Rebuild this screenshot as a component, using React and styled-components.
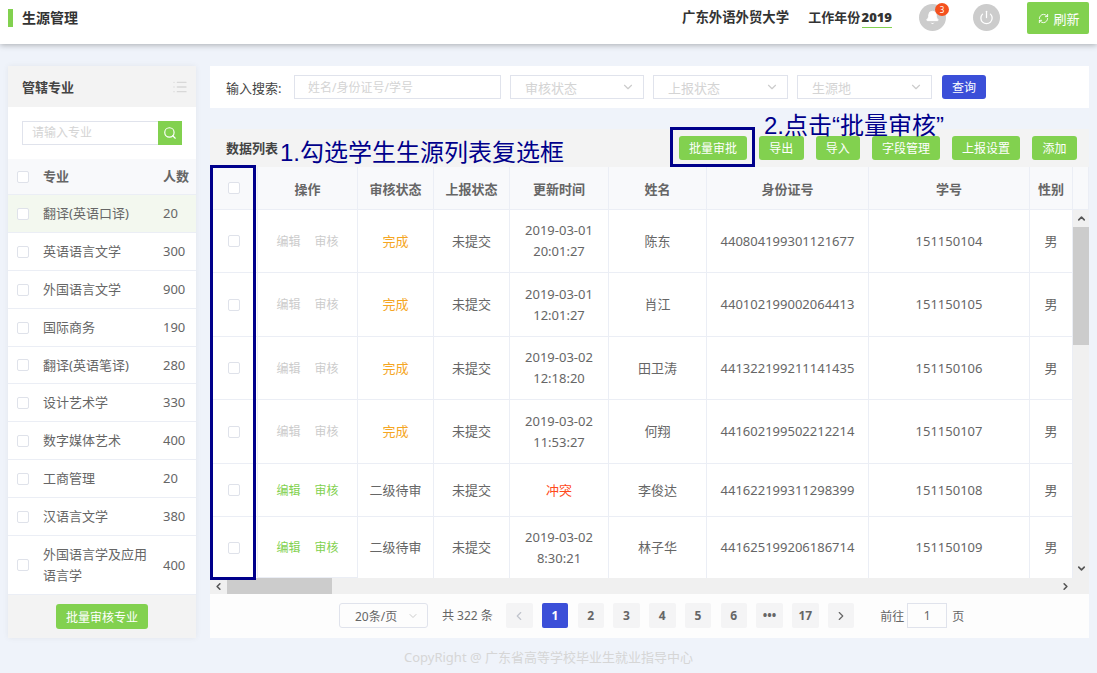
import styled, { createGlobalStyle } from "styled-components";
import { Search, ChevronDown, ChevronLeft, ChevronRight, Bell, Power, RefreshCw, List } from "lucide-react";

const GlobalStyle = createGlobalStyle`
  html, body {
    margin: 0;
    padding: 0;
    background: #eff3fa;
  }
  * {
    box-sizing: border-box;
  }
  body {
    font-family: "Noto Sans", "Noto Sans CJK SC", sans-serif;
    font-size: 13px;
    color: #666;
  }
`;

const Page = styled.div`
  width: 1097px;
  height: 673px;
  overflow: hidden;
  display: flex;
  flex-direction: column;
`;

const Header = styled.header`
  height: 44px;
  flex: none;
  background: #fff;
  box-shadow: 0 1px 6px rgba(0, 0, 0, 0.3);
  display: flex;
  align-items: flex-start;
  padding: 2px 8px 0;
  position: relative;
`;

const PageTitle = styled.h1`
  margin: 7px 0 0;
  height: 18px;
  border-left: 5px solid #82d14f;
  padding-left: 9px;
  font-size: 14px;
  line-height: 18px;
  font-weight: 700;
  color: #333;
`;

const HeaderRight = styled.div`
  margin-left: auto;
  display: flex;
  align-items: flex-start;
`;

const School = styled.span`
  font-size: 13.4px;
  font-weight: 700;
  color: #333;
  line-height: 18px;
  margin-top: 6px;
  margin-right: 19px;
`;

const Year = styled.span`
  font-size: 13px;
  font-weight: 700;
  color: #333;
  line-height: 18px;
  margin-top: 6px;
  margin-right: 27px;
  word-spacing: -2px;

  b {
    border-bottom: 1px solid #82d14f;
    padding-bottom: 1px;
  }
`;

const RoundIcon = styled.div`
  width: 27px;
  height: 27px;
  margin-top: 2px;
  margin-right: ${(p) => p.$gap}px;
  border-radius: 50%;
  background: #ccc;
  color: #fff;
  display: flex;
  align-items: center;
  justify-content: center;
  position: relative;
`;

const Badge = styled.span`
  position: absolute;
  top: -1px;
  right: -3px;
  width: 14px;
  height: 13px;
  border-radius: 50%;
  background: #f4511e;
  color: #fff;
  font-size: 8px;
  line-height: 13px;
  text-align: center;
`;

const RefreshButton = styled.button`
  width: 62px;
  height: 32px;
  border: 0;
  border-radius: 2px;
  background: #82d14f;
  color: #fff;
  font: inherit;
  display: flex;
  align-items: center;
  justify-content: center;
  gap: 4px;
  padding: 0 0 0 2px;
`;

const Content = styled.div`
  flex: none;
  height: 572px;
  margin-top: 22px;
  padding: 0 8px;
  display: flex;
  gap: 14px;
`;

const Sidebar = styled.aside`
  width: 188px;
  flex: none;
  background: #fff;
  box-shadow: 0 0 6px rgba(0, 0, 0, 0.06);
  display: flex;
  flex-direction: column;
`;

const SideTitle = styled.div`
  height: 41px;
  flex: none;
  background: #f3f3f3;
  display: flex;
  align-items: center;
  justify-content: space-between;
  padding: 0 8px 0 14px;
  font-weight: 700;
  color: #444;
`;

const SideSearch = styled.div`
  height: 52px;
  flex: none;
  padding: 14px 14px 0;
  display: flex;
  align-items: flex-start;
`;

const SideInput = styled.div`
  flex: 1;
  height: 24px;
  border: 1px solid #e0e3ec;
  border-right: 0;
  padding-left: 9px;
  font-size: 12px;
  line-height: 22px;
  color: #d4d4d4;
`;

const SideSearchButton = styled.div`
  width: 24px;
  height: 24px;
  background: #82d14f;
  color: #fff;
  display: flex;
  align-items: center;
  justify-content: center;
`;

const MajorRow = styled.div`
  height: ${(p) => p.$h}px;
  flex: none;
  display: grid;
  grid-template-columns: 26px 120px 1fr;
  align-items: center;
  padding-left: 9px;
  border-bottom: 1px solid #ebeef5;
  background: ${(p) => (p.$head ? "#f8f9fb" : p.$active ? "#f3f8ef" : "#fff")};
  color: #666;
  font-weight: ${(p) => (p.$head ? 700 : 400)};
  line-height: 21px;
`;

const MajorName = styled.span`
  padding-right: 8px;
`;

const Check = styled.span`
  display: block;
  width: 12px;
  height: 12px;
  background: #fff;
  border: 1px solid #dfe2ea;
  border-radius: 2px;
`;

const SideFoot = styled.div`
  flex: 1;
  background: #f3f3f3;
  display: flex;
  align-items: center;
  justify-content: center;
`;

const GreenButton = styled.button`
  height: ${(p) => p.$h || 24}px;
  width: ${(p) => p.$w}px;
  border: 0;
  border-radius: 3px;
  background: #82d14f;
  color: #fff;
  font: inherit;
  font-size: 12px;
  padding: 0;
`;

const Main = styled.main`
  flex: 1;
  min-width: 0;
  display: flex;
  flex-direction: column;
  gap: 21px;
`;

const SearchCard = styled.section`
  height: 42px;
  flex: none;
  background: #fff;
  display: flex;
  align-items: center;
  padding-left: 16px;
  gap: 9px;
`;

const SearchLabel = styled.span`
  font-size: 13px;
  color: #444;
  width: 59px;
  flex: none;
  white-space: nowrap;
`;

const Field = styled.div`
  width: ${(p) => p.$w}px;
  height: 24px;
  border: 1px solid #e0e3ec;
  padding: 0 ${(p) => (p.$select ? "8px 0 14px" : "13px")};
  font-size: ${(p) => (p.$select ? 13 : 12)}px;
  color: #d4d4d4;
  display: flex;
  align-items: center;
  justify-content: space-between;
`;

const QueryButton = styled.button`
  width: 44px;
  height: 24px;
  margin-left: 1px;
  border: 0;
  border-radius: 3px;
  background: #3b4fd8;
  color: #fff;
  font: inherit;
  font-size: 12px;
  padding: 0;
`;

const TableCard = styled.section`
  flex: 1;
  min-height: 0;
  background: #fff;
  display: flex;
  flex-direction: column;
  position: relative;
`;

const TableBar = styled.div`
  height: 38px;
  flex: none;
  background: #f3f3f3;
  display: flex;
  align-items: center;
  padding: 0 12px 0 16px;
  gap: 12px;
`;

const BarTitle = styled.span`
  margin-right: auto;
  font-size: 13px;
  font-weight: 700;
  color: #444;
  margin-top: -2px;
`;

const COLUMNS = "48px 100px 76px 76px 99px 98px 162px 161px 43px";

const HeadRow = styled.div`
  height: 43px;
  flex: none;
  display: grid;
  grid-template-columns: ${COLUMNS} 16px;
  background: #f8f9fb;
  border-bottom: 1px solid #ebeef5;
`;

const HeadCell = styled.div`
  display: flex;
  align-items: center;
  justify-content: center;
  border-right: 1px solid #ebeef5;
  font-size: 13px;
  font-weight: 700;
  color: #666;
`;

const TableBody = styled.div`
  height: 384px;
  flex: none;
  display: grid;
  grid-template-columns: 863px 16px;
`;

const RowsWrap = styled.div`
  display: flex;
  flex-direction: column;
  min-width: 0;
`;

const DataRow = styled.div`
  height: ${(p) => p.$h}px;
  flex: none;
  display: grid;
  grid-template-columns: ${COLUMNS};
  border-bottom: ${(p) => (p.$last ? 0 : "1px solid #ebeef5")};
`;

const Cell = styled.div`
  display: flex;
  align-items: center;
  justify-content: center;
  text-align: center;
  border-right: 1px solid #ebeef5;
  border-bottom: ${(p) => (p.$under ? "1px solid #ebeef5" : 0)};
  line-height: 21px;
  color: ${(p) => p.$color || "#666"};
`;

const OpLink = styled.span`
  font-size: 12px;
  color: ${(p) => (p.$on ? "#82d14f" : "#ccc")};
  margin: 0 7px;
`;

const HScroll = styled.div`
  height: 16px;
  flex: none;
  margin-top: auto;
  background: #f0f0f0;
  display: flex;
  align-items: center;
  justify-content: space-between;
  color: #555;
  padding-right: 2px;
`;

const HLeft = styled.div`
  display: flex;
  align-items: center;
  height: 100%;
`;

const ScrollEnd = styled.span`
  width: 17px;
  display: flex;
  justify-content: center;
`;

const HThumb = styled.div`
  width: 105px;
  height: 100%;
  background: #ccc;
`;

const VScroll = styled.div`
  background: #f0f0f0;
  color: #555;
  display: flex;
  flex-direction: column;
  align-items: center;
`;

const VThumb = styled.div`
  width: 100%;
  height: 118px;
  background: #ccc;
`;

const VEnd = styled.span`
  height: 17px;
  display: flex;
  align-items: center;
  margin-top: ${(p) => (p.$bottom ? "auto" : 0)};
  margin-bottom: ${(p) => (p.$bottom ? "17px" : 0)};
`;

const Pager = styled.div`
  flex: 1;
  background: #fdfdfd;
  display: flex;
  align-items: flex-start;
  padding: 9px 0 0 129px;
`;

const PageSize = styled.div`
  width: 89px;
  height: 25px;
  border: 1px solid #e0e3ec;
  border-radius: 3px;
  padding: 0 8px 0 15px;
  font-size: 12px;
  display: flex;
  align-items: center;
  justify-content: space-between;
  color: #666;
  margin-right: 14px;
`;

const Total = styled.span`
  font-size: 12px;
  line-height: 25px;
  width: 64px;
  flex: none;
`;

const PageList = styled.div`
  display: flex;
  gap: 9.25px;
`;

const PageButton = styled.div`
  width: 26.5px;
  height: 25px;
  border-radius: 2px;
  background: ${(p) => (p.$active ? "#3b4fd8" : "#f4f4f5")};
  color: ${(p) => (p.$active ? "#fff" : p.$muted ? "#c0c4cc" : "#666")};
  font-size: 12px;
  font-weight: 700;
  display: flex;
  align-items: center;
  justify-content: center;
`;

const Jump = styled.div`
  margin-left: 26px;
  display: flex;
  align-items: center;
  height: 25px;
  font-size: 12px;
  gap: 3px;
`;

const JumpInput = styled.div`
  width: 40px;
  height: 25px;
  border: 1px solid #e0e3ec;
  display: flex;
  align-items: center;
  justify-content: center;
  margin-right: 2px;
`;

const Footer = styled.footer`
  flex: 1;
  text-align: center;
  color: #d6d6d6;
  font-size: 13px;
  line-height: 38px;
`;

const BlueBox = styled.div`
  position: absolute;
  left: ${(p) => p.$x}px;
  top: ${(p) => p.$y}px;
  width: ${(p) => p.$w}px;
  height: ${(p) => p.$h}px;
  border: 3px solid #00008b;
`;

const Note = styled.div`
  position: absolute;
  left: ${(p) => p.$x}px;
  top: ${(p) => p.$y}px;
  font-family: "Liberation Sans", "Noto Sans CJK SC", sans-serif;
  font-size: 24px;
  line-height: 28px;
  color: #00008b;
  white-space: nowrap;
`;

const majors = [
  { name: "翻译(英语口译)", count: 20, h: 38, active: true },
  { name: "英语语言文学", count: 300, h: 38 },
  { name: "外国语言文学", count: 900, h: 38 },
  { name: "国际商务", count: 190, h: 38 },
  { name: "翻译(英语笔译)", count: 280, h: 37 },
  { name: "设计艺术学", count: 330, h: 38 },
  { name: "数字媒体艺术", count: 400, h: 38 },
  { name: "工商管理", count: 20, h: 38 },
  { name: "汉语言文学", count: 380, h: 38 },
  { name: "外国语言学及应用语言学", count: 400, h: 59 },
];

const students = [
  { h: 63, done: true, review: "完成", date: "2019-03-01", time: "20:01:27", name: "陈东", id: "440804199301121677", no: "151150104" },
  { h: 64, done: true, review: "完成", date: "2019-03-01", time: "12:01:27", name: "肖江", id: "440102199002064413", no: "151150105" },
  { h: 63, done: true, review: "完成", date: "2019-03-02", time: "12:18:20", name: "田卫涛", id: "441322199211141435", no: "151150106" },
  { h: 64, done: true, review: "完成", date: "2019-03-02", time: "11:53:27", name: "何翔", id: "441602199502212214", no: "151150107" },
  { h: 53, review: "二级待审", conflict: true, name: "李俊达", id: "441622199311298399", no: "151150108" },
  { h: 61, review: "二级待审", date: "2019-03-02", time: "8:30:21", name: "林子华", id: "441625199206186714", no: "151150109" },
];

const columns = ["操作", "审核状态", "上报状态", "更新时间", "姓名", "身份证号", "学号", "性别"];
const pages = ["2", "3", "4", "5", "6", "•••", "17"];

export default function App() {
  return (
    <Page>
      <GlobalStyle />
      <Header>
        <PageTitle>生源管理</PageTitle>
        <HeaderRight>
          <School>广东外语外贸大学</School>
          <Year>
            工作年份 <b>2019</b>
          </Year>
          <RoundIcon $gap={27}>
            <Bell size={15} fill="#fff" strokeWidth={1.5} />
            <Badge>3</Badge>
          </RoundIcon>
          <RoundIcon $gap={27}>
            <Power size={15} strokeWidth={2} />
          </RoundIcon>
          <RefreshButton>
            <RefreshCw size={11} />
            刷新
          </RefreshButton>
        </HeaderRight>
      </Header>

      <Content>
        <Sidebar>
          <SideTitle>
            管辖专业
            <List size={16} color="#d8d8d8" />
          </SideTitle>
          <SideSearch>
            <SideInput>请输入专业</SideInput>
            <SideSearchButton>
              <Search size={14} />
            </SideSearchButton>
          </SideSearch>
          <MajorRow $head $h={36}>
            <Check />
            <MajorName>专业</MajorName>
            <span>人数</span>
          </MajorRow>
          {majors.map((m) => (
            <MajorRow key={m.name} $h={m.h} $active={m.active}>
              <Check />
              <MajorName>{m.name}</MajorName>
              <span>{m.count}</span>
            </MajorRow>
          ))}
          <SideFoot>
            <GreenButton $w={92} $h={25}>批量审核专业</GreenButton>
          </SideFoot>
        </Sidebar>

        <Main>
          <SearchCard>
            <SearchLabel>输入搜索:</SearchLabel>
            <Field $w={207}>姓名/身份证号/学号</Field>
            <Field $w={134} $select>
              <span>审核状态</span>
              <ChevronDown size={14} color="#ccc" />
            </Field>
            <Field $w={135} $select>
              <span>上报状态</span>
              <ChevronDown size={14} color="#ccc" />
            </Field>
            <Field $w={135} $select>
              <span>生源地</span>
              <ChevronDown size={14} color="#ccc" />
            </Field>
            <QueryButton>查询</QueryButton>
          </SearchCard>

          <TableCard>
            <TableBar>
              <BarTitle>数据列表</BarTitle>
              <GreenButton $w={68}>批量审批</GreenButton>
              <GreenButton $w={44.5}>导出</GreenButton>
              <GreenButton $w={44.5}>导入</GreenButton>
              <GreenButton $w={68}>字段管理</GreenButton>
              <GreenButton $w={68}>上报设置</GreenButton>
              <GreenButton $w={45}>添加</GreenButton>
            </TableBar>
            <HeadRow>
              <HeadCell>
                <Check />
              </HeadCell>
              {columns.map((c) => (
                <HeadCell key={c}>{c}</HeadCell>
              ))}
              <HeadCell />
            </HeadRow>
            <TableBody>
              <RowsWrap>
                {students.map((s, i) => {
                  const last = i === students.length - 1;
                  return (
                    <DataRow key={s.id} $h={s.h} $last={last}>
                      <Cell>
                        <Check />
                      </Cell>
                      <Cell $under={last}>
                        <OpLink $on={!s.done}>编辑</OpLink>
                        <OpLink $on={!s.done}>审核</OpLink>
                      </Cell>
                      <Cell $color={s.done ? "#f5a623" : undefined}>{s.review}</Cell>
                      <Cell>未提交</Cell>
                      <Cell $color={s.conflict ? "#ff4a1c" : undefined}>
                        {s.conflict ? (
                          "冲突"
                        ) : (
                          <span>
                            {s.date}
                            <br />
                            {s.time}
                          </span>
                        )}
                      </Cell>
                      <Cell>{s.name}</Cell>
                      <Cell>{s.id}</Cell>
                      <Cell>{s.no}</Cell>
                      <Cell>男</Cell>
                    </DataRow>
                  );
                })}
                <HScroll>
                  <HLeft>
                    <ScrollEnd>
                      <ChevronLeft size={11} strokeWidth={3.5} />
                    </ScrollEnd>
                    <HThumb />
                  </HLeft>
                  <ChevronRight size={11} strokeWidth={3.5} />
                </HScroll>
              </RowsWrap>
              <VScroll>
                <VEnd>
                  <ChevronDown size={11} strokeWidth={3.5} style={{ transform: "rotate(180deg)" }} />
                </VEnd>
                <VThumb />
                <VEnd $bottom>
                  <ChevronDown size={11} strokeWidth={3.5} />
                </VEnd>
              </VScroll>
            </TableBody>
            <Pager>
              <PageSize>
                <span>20条/页</span>
                <ChevronDown size={12} color="#ccc" />
              </PageSize>
              <Total>共 322 条</Total>
              <PageList>
                <PageButton $muted>
                  <ChevronLeft size={14} />
                </PageButton>
                <PageButton $active>1</PageButton>
                {pages.map((p) => (
                  <PageButton key={p}>{p}</PageButton>
                ))}
                <PageButton>
                  <ChevronRight size={14} />
                </PageButton>
              </PageList>
              <Jump>
                前往
                <JumpInput>1</JumpInput>
                页
              </Jump>
            </Pager>
            <BlueBox $x={0} $y={36} $w={46} $h={415} />
            <BlueBox $x={460} $y={-2} $w={85} $h={40} />
            <Note $x={70} $y={10}>1.勾选学生生源列表复选框</Note>
            <Note $x={554} $y={-17}>2.点击“批量审核”</Note>
          </TableCard>
        </Main>
      </Content>
      <Footer>CopyRight @ 广东省高等学校毕业生就业指导中心</Footer>
    </Page>
  );
}
